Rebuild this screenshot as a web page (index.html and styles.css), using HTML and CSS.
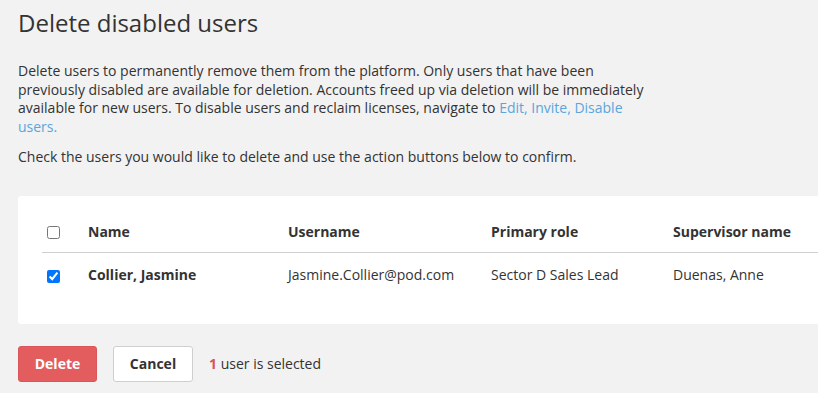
FILE: index.html
```html
<!DOCTYPE html>
<html lang="en">
<head>
  <meta charset="UTF-8">
  <title>Delete disabled users</title>
  <link rel="stylesheet" href="styles.css">
</head>
<body>
  <div class="page">
    <h1 class="page-title">Delete disabled users</h1>
    <p class="intro">Delete users to permanently remove them from the platform. Only users that have been previously disabled are available for deletion. Accounts freed up via deletion will be immediately available for new users. To disable users and reclaim licenses, navigate to <a href="#" class="link">Edit, Invite, Disable users.</a></p>
    <p class="intro">Check the users you would like to delete and use the action buttons below to confirm.</p>

    <div class="users-card">
      <table class="users-table">
        <colgroup>
          <col class="col-check">
          <col class="col-name">
          <col class="col-username">
          <col class="col-role">
          <col class="col-supervisor">
        </colgroup>
        <thead>
          <tr>
            <th class="check-cell"><input type="checkbox"></th>
            <th>Name</th>
            <th>Username</th>
            <th>Primary role</th>
            <th>Supervisor name</th>
          </tr>
        </thead>
        <tbody>
          <tr>
            <td class="check-cell"><input type="checkbox" checked></td>
            <td class="user-name">Collier, Jasmine</td>
            <td>Jasmine.Collier@pod.com</td>
            <td>Sector D Sales Lead</td>
            <td>Duenas, Anne</td>
          </tr>
        </tbody>
      </table>
    </div>

    <div class="actions">
      <button type="button" class="btn btn-delete">Delete</button>
      <button type="button" class="btn btn-cancel">Cancel</button>
      <span class="selected-count"><strong>1</strong> user is selected</span>
    </div>
  </div>
</body>
</html>
```

FILE: styles.css
```css
body {
  margin: 0;
  background: #f2f2f2;
  font-family: 'Open Sans', 'Noto Sans', sans-serif;
  color: #333;
  overflow: hidden;
}
.page {
  padding: 0 0 0 18px;
}
.page-title {
  font-size: 24px;
  font-weight: 400;
  line-height: 32px;
  margin: 7px 0 23px 0;
  color: #333;
}
.intro {
  font-size: 14px;
  line-height: 18.7px;
  max-width: 640px;
  margin: 0 0 11px 0;
}
.link {
  color: #5aa5dc;
  text-decoration: none;
}
.users-card {
  background: #fff;
  border-radius: 3px;
  margin-top: 29px;
  padding: 15px 24px 27px 24px;
  box-sizing: border-box;
  width: 860px;
}
.users-table {
  border-collapse: collapse;
  table-layout: fixed;
  width: 100%;
  font-size: 14px;
}
.col-check { width: 38px; }
.col-name { width: 200px; }
.col-username { width: 203px; }
.col-role { width: 182px; }
.users-table th {
  text-align: left;
  font-weight: 700;
  height: 41px;
  padding: 0 8px;
  border-bottom: 1px solid #cfcfcf;
  vertical-align: middle;
}
.users-table td {
  height: 44px;
  padding: 0 8px;
  vertical-align: middle;
}
.users-table .check-cell {
  padding: 0 0 0 5px;
}
.check-cell input {
  margin: 0;
  width: 13px;
  height: 13px;
  vertical-align: middle;
}
.user-name {
  font-weight: 700;
}
.actions {
  display: flex;
  align-items: center;
  gap: 16px;
  margin-top: 22px;
}
.btn {
  font-family: inherit;
  font-size: 14px;
  font-weight: 700;
  height: 36px;
  border-radius: 3px;
  cursor: pointer;
}
.btn-delete {
  width: 79px;
  background: #e35d5f;
  color: #fff;
  border: 1px solid #d9575a;
}
.btn-cancel {
  width: 80px;
  background: #fff;
  color: #333;
  border: 1px solid #cfcfcf;
}
.selected-count {
  font-size: 14px;
}
.selected-count strong {
  color: #d9535a;
}
```
